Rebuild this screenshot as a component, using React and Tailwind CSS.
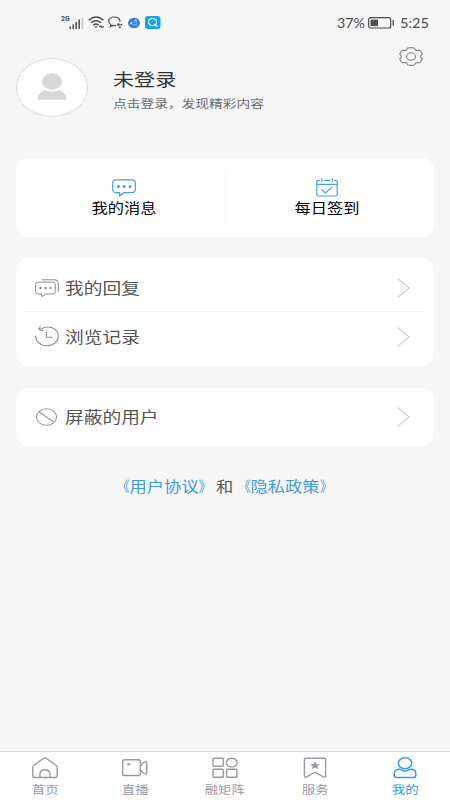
const tabs = [
  { label: "首页", icon: HomeIcon },
  { label: "直播", icon: LiveIcon },
  { label: "融矩阵", icon: MatrixIcon },
  { label: "服务", icon: ServiceIcon },
  { label: "我的", icon: MineIcon, active: true },
];

/* ---------- status bar icons ---------- */

function SignalIcon() {
  return (
    <svg width="15" height="12" viewBox="0 0 15 12">
      <path d="M1.2 9.5V12M4.2 7.5V12M7.2 5V12M10.2 2.5V12" stroke="#555" strokeWidth="1.6" />
      <path d="M13.4 0.5V12" stroke="#c8c8c8" strokeWidth="1.6" />
    </svg>
  );
}

function WifiIcon() {
  return (
    <svg width="17" height="13" viewBox="0 0 17 13" fill="none" stroke="#4a4a4a" strokeWidth="1.5">
      <path d="M0.8 4.2Q8 -2.2 15.4 4.2M3 6.8Q8 2.6 13 6.8M5.3 9.1Q8 7 10.7 9.1" />
      <path d="M6.4 10.3h3.2L8 12z" fill="#4a4a4a" stroke="none" />
      <path d="M11.2 11l1.4-1 1.6 1.4 1.4-1" strokeWidth="1.2" />
    </svg>
  );
}

function BubbleIcon() {
  return (
    <svg width="15" height="13" viewBox="0 0 15 13" fill="none" stroke="#4a4a4a" strokeWidth="1.2">
      <path d="M8 9.3Q6.5 9.8 4.8 9.4L2.3 10.6L2.7 8.5Q.7 7.3 .7 5.3C.7 2.8 3.2 1 6.3 1C9.6 1 12.2 2.9 12 5.8" />
      <circle cx="10.5" cy="8.6" r="1.3" fill="#4a4a4a" stroke="none" />
      <circle cx="13.3" cy="8.8" r="1" fill="#4a4a4a" stroke="none" />
      <circle cx="11.8" cy="11.2" r="1" fill="#4a4a4a" stroke="none" />
    </svg>
  );
}

function GlobeBadge() {
  return (
    <svg width="16" height="14" viewBox="0 0 16 14">
      <rect width="16" height="14" rx="4" fill="#fdfdfd" />
      <ellipse cx="8" cy="7" rx="6" ry="5.2" fill="#3d7bd9" />
      <path d="M4.5 7.5l5-3.5M4.5 7.5l6.5 2M9.5 4l1.5 5.5" stroke="#a9caf5" strokeWidth=".7" fill="none" />
      <circle cx="5" cy="7.3" r=".9" fill="#d3e4fb" />
      <circle cx="10" cy="4.5" r=".7" fill="#d3e4fb" />
    </svg>
  );
}

function SearchBadge() {
  return (
    <svg width="16" height="13" viewBox="0 0 16 13">
      <rect width="15.5" height="13" rx="3" fill="#18a3e6" />
      <ellipse cx="7.5" cy="6" rx="4" ry="3.5" fill="none" stroke="#fff" strokeWidth="1.2" />
      <path d="M10.2 8.5l2 1.7" stroke="#fff" strokeWidth="1.2" strokeLinecap="round" />
    </svg>
  );
}

function BatteryIcon() {
  return (
    <svg width="27" height="12" viewBox="0 0 27 12">
      <rect x=".7" y=".7" width="22" height="10.3" rx="2" fill="none" stroke="#4a4a4a" strokeWidth="1.2" />
      <rect x="2.6" y="2.6" width="7.4" height="6.5" fill="#505050" />
      <path d="M25.2 3v5.7" stroke="#4a4a4a" strokeWidth="1.3" />
    </svg>
  );
}

/* ---------- page icons ---------- */

function GearIcon() {
  return (
    <svg width="24" height="19" viewBox="0 0 24 19" fill="none" stroke="#828282" strokeWidth="1.1">
      <path d="M8.8 1Q12 .2 15.2 1L16.5 3Q17.2 3.6 18.2 3.4L20.6 3.2Q22.7 5 23.3 7.2L21.8 8.8Q21.4 9.5 21.8 10.2L23.3 11.8Q22.7 14 20.6 15.8L18.2 15.6Q17.2 15.5 16.5 16.2L15.2 18Q12 18.8 8.8 18L7.5 16.2Q6.8 15.5 5.8 15.6L3.4 15.8Q1.3 14 .7 11.8L2.2 10.2Q2.6 9.5 2.2 8.8L.7 7.2Q1.3 5 3.4 3.2L5.8 3.4Q6.8 3.6 7.5 3Z" />
      <ellipse cx="12" cy="9.5" rx="4.5" ry="3.7" />
    </svg>
  );
}

function MessageIcon() {
  return (
    <svg width="24" height="18" viewBox="0 0 24 18" fill="none" stroke="#4e9fd8" strokeWidth="1.2">
      <path d="M4 .9H20Q23.3 .9 23.3 4V10.6Q23.3 13.7 20 13.7H12L7.6 16.8V13.7H4Q.7 13.7 .7 10.6V4Q.7 .9 4 .9Z" />
      <g fill="#3f97d8" stroke="none">
        <ellipse cx="6.3" cy="7.6" rx="1.5" ry="1.3" />
        <ellipse cx="12.2" cy="7.6" rx="1.5" ry="1.3" />
        <ellipse cx="18" cy="7.6" rx="1.5" ry="1.3" />
      </g>
    </svg>
  );
}

function CalendarIcon() {
  return (
    <svg width="22" height="19" viewBox="0 0 22 19" fill="none" stroke="#4e9fd8" strokeWidth="1.2">
      <path d="M3.8 2.4H2.5Q.8 2.4 .8 4V16.8Q.8 18 2.5 18H19.5Q21.2 18 21.2 16.8V4Q21.2 2.4 19.5 2.4H18.2M7.8 2.4H14.2M.8 6.3H21.2M5.8 .4V4.2M16.2 .4V4.2" />
      <path d="M5.6 11.5L9.4 15L16 9.2" />
    </svg>
  );
}

function ReplyIcon() {
  return (
    <svg width="24" height="19" viewBox="0 0 24 19" fill="none" stroke="#8a8a8a" strokeWidth="1">
      <path d="M3.5 3.1H17.5Q20.3 3.1 20.3 5.8V12.3Q20.3 15 17.5 15H10.5L6.7 17.7V15H3.5Q.7 15 .7 12.3V5.8Q.7 3.1 3.5 3.1Z" />
      <path d="M7 .8H20Q23.2 .8 23.2 3.6V13.2" />
      <g fill="#8a8a8a" stroke="none">
        <circle cx="5.5" cy="9" r="1.2" />
        <circle cx="10.5" cy="9" r="1.2" />
        <circle cx="15.5" cy="9" r="1.2" />
      </g>
    </svg>
  );
}

function HistoryIcon() {
  return (
    <svg width="24" height="21" viewBox="0 0 24 21" fill="none" stroke="#8e8e8e" strokeWidth="1.1">
      <path d="M5.2 3.5C13-2 23.3 2.3 23.3 10.3C23.3 15.7 18.3 19.7 12 19.7C5.5 19.7 .5 15.6 .7 9.5" />
      <path d="M5.2 .5L4.3 3.7L8.2 4.6M3.4 2.4L5 4" />
      <path d="M11.5 5.5V11.2H17.5" />
    </svg>
  );
}

function BlockIcon() {
  return (
    <svg width="24" height="19" viewBox="0 0 24 19" fill="none" stroke="#999" strokeWidth="1.1">
      <ellipse cx="11.5" cy="9" rx="10" ry="8.3" />
      <path d="M4 3.8L19 14.2" />
    </svg>
  );
}

function ArrowIcon() {
  return (
    <svg width="13" height="20" viewBox="0 0 13 20" fill="none" stroke="#bdbdbd" strokeWidth="1">
      <path d="M.5 .5L12.3 10L.5 19.5" />
    </svg>
  );
}

/* ---------- tab icons ---------- */

function HomeIcon() {
  return (
    <svg width="28" height="22" viewBox="0 0 28 22" fill="none" stroke="currentColor" strokeWidth="1.4">
      <path d="M12.3 1.5Q14 .3 15.7 1.5L25 8.3Q26.2 9.2 26.2 10.5V18.6Q26.2 20.5 24.3 20.5H3.7Q1.8 20.5 1.8 18.6V10.5Q1.8 9.2 3 8.3Z" />
      <path d="M9 20.5V17Q9 12.8 14 12.8Q19 12.8 19 17V20.5" />
    </svg>
  );
}

function LiveIcon() {
  return (
    <svg width="28" height="22" viewBox="0 0 28 22" fill="none" stroke="currentColor" strokeWidth="1.4">
      <rect x="1.7" y="2.8" width="17.6" height="15.7" rx="1.8" />
      <path d="M19.3 9L22.3 5.6Q25.8 3.6 25.8 5.6V16Q25.8 18 22.3 16L19.3 12.8" />
      <ellipse cx="7.6" cy="7.3" rx="1.5" ry="1.3" fill="currentColor" stroke="none" />
    </svg>
  );
}

function MatrixIcon() {
  return (
    <svg width="28" height="22" viewBox="0 0 28 22" fill="none" stroke="currentColor" strokeWidth="1.4">
      <rect x="2" y="1.2" width="10.3" height="8" rx=".8" />
      <ellipse cx="20.7" cy="5.7" rx="5.4" ry="4.4" />
      <rect x="2" y="12.3" width="10.3" height="8" rx=".8" />
      <rect x="15.6" y="12.3" width="10.3" height="8" rx=".8" />
    </svg>
  );
}

function ServiceIcon() {
  return (
    <svg width="28" height="22" viewBox="0 0 28 22" fill="none" stroke="currentColor" strokeWidth="1.4">
      <path d="M4.600 1.200H23.400Q24.600 1.200 24.600 2.300V18.900Q24.600 21 22.300 19.900L14 15.200L5.700 19.900Q3.400 21 3.400 18.900V2.300Q3.400 1.200 4.600 1.200Z" />
      <path d="M14 4L15.400 7.100H19L16.200 9.100L17.300 12.500L14 10.500L10.700 12.500L11.800 9.100L9 7.100H12.600Z" fill="currentColor" stroke="none" />
    </svg>
  );
}

function MineIcon() {
  return (
    <svg width="28" height="22" viewBox="0 0 28 22" fill="none" stroke="currentColor" strokeWidth="1.5">
      <ellipse cx="14" cy="6.3" rx="6.7" ry="5.5" />
      <path d="M7.5 12.3Q3.2 13 3.2 17.2V18.5Q3.2 20.4 5.4 20.4H22.6Q24.8 20.4 24.8 18.5V17.2Q24.8 13 20.5 12.3Q18.5 12.2 17 13.2Q14 14.8 11 13.2Q9.5 12.2 7.5 12.3Z" />
    </svg>
  );
}

function MenuRow({ icon: Icon, label }) {
  return (
    <div className="flex items-center pl-[19px] pr-6">
      <Icon />
      <span className="ml-[6px] origin-left scale-x-[1.2] text-[15.6px] leading-none text-[#555]">
        {label}
      </span>
      <span className="ml-auto">
        <ArrowIcon />
      </span>
    </div>
  );
}

function AgreementLink({ children }) {
  return (
    <span className="text-[#419bd8]">
      <span className="inline-block origin-right scale-x-[0.72]">《</span>
      {children}
      <span className="inline-block origin-left scale-x-[0.72]">》</span>
    </span>
  );
}

export default function App() {
  return (
    <div className="flex h-[800px] w-[450px] flex-col overflow-hidden bg-[#f6f6f6] font-['Noto_Sans_CJK_SC',sans-serif]">
      {/* Status bar */}
      <header className="flex h-[45px] shrink-0 items-center pl-[61px] text-[#4a4a4a]">
        <span className="mb-[7px] w-2 origin-left font-['Roboto',sans-serif] text-[7px] font-bold leading-none">
          2G
        </span>
        <SignalIcon />
        <span className="ml-[4px]">
          <WifiIcon />
        </span>
        <span className="ml-[3px]">
          <BubbleIcon />
        </span>
        <span className="ml-[3px]">
          <GlobeBadge />
        </span>
        <span className="ml-[3px]">
          <SearchBadge />
        </span>
        <span className="ml-auto w-[31px] origin-left scale-x-[1.1] pt-px font-['Lato',sans-serif] text-[13px] leading-none">
          37%
        </span>
        <BatteryIcon />
        <span className="ml-[5px] mr-[21px] w-[29px] origin-left scale-x-[1.12] pt-px font-['Lato',sans-serif] text-[13px] leading-none">
          5:25
        </span>
      </header>

      {/* Profile */}
      <section className="flex h-[113px] shrink-0 pl-4 pr-[27px]">
        <div className="mt-[13px] flex h-[59px] w-[72px] items-center justify-center rounded-[50%] border border-[#dedede] bg-white pb-[2px]">
          <svg width="30" height="27" viewBox="0 0 30 27" fill="#d8d8d8">
            <ellipse cx="15" cy="8.5" rx="10" ry="8.3" />
            <path d="M.2 26.7Q1 19 8 17Q15 20.5 22 17Q29 19 29.8 26.7Z" />
          </svg>
        </div>
        <div className="ml-[25px] pt-[25px]">
          <h1 className="origin-left scale-x-[1.2] text-[17.6px] leading-[18px] text-[#333]">未登录</h1>
          <p className="mt-[9px] w-[130px] origin-left scale-x-[1.2] whitespace-nowrap text-[11.45px] leading-[12px] text-[#6a6a6a]">
            点击登录，发现精彩内容
          </p>
        </div>
        <div className="ml-auto mt-[2px]">
          <GearIcon />
        </div>
      </section>

      {/* Shortcuts */}
      <section className="mx-4 flex h-[79px] shrink-0 items-center rounded-[12px] bg-white">
        <div className="flex flex-1 flex-col items-center pb-[4px] pl-[7px]">
          <div className="flex h-5 items-end">
            <MessageIcon />
          </div>
          <span className="mt-[3px] scale-x-[1.2] text-[13.5px] leading-[14px] text-black">我的消息</span>
        </div>
        <div className="h-[53px] w-px bg-[#f6f6f6]"></div>
        <div className="flex flex-1 flex-col items-center pb-[4px] pr-[6px]">
          <div className="flex h-5 items-end">
            <CalendarIcon />
          </div>
          <span className="mt-[3px] scale-x-[1.2] text-[13.5px] leading-[14px] text-black">每日签到</span>
        </div>
      </section>

      {/* Menu */}
      <section className="mx-4 mt-[21px] flex h-[108px] shrink-0 flex-col rounded-[12px] bg-white pt-5">
        <MenuRow icon={ReplyIcon} label="我的回复" />
        <div className="mx-2 mb-[14px] mt-[13px] h-px bg-[#f7f7f7]"></div>
        <MenuRow icon={HistoryIcon} label="浏览记录" />
      </section>

      <section className="mx-4 mt-[22px] flex h-[58px] shrink-0 flex-col justify-center rounded-[12px] bg-white">
        <MenuRow icon={BlockIcon} label="屏蔽的用户" />
      </section>

      {/* Agreements */}
      <p className="mt-[31px] text-center text-[14.4px] leading-[18px] text-[#555]">
        <span className="inline-block scale-x-[1.2]">
          <AgreementLink>用户协议</AgreementLink>和<AgreementLink>隐私政策</AgreementLink>
        </span>
      </p>

      {/* Tab bar */}
      <nav className="mt-auto flex h-[49px] shrink-0 border-t border-[#dcdcdc] bg-white">
        {tabs.map(({ label, icon: Icon, active }) => (
          <div
            key={label}
            className={`flex flex-1 flex-col items-center pt-[5px] ${
              active ? "text-[#3c9ae0]" : "text-[#9a9aa2]"
            }`}
          >
            <Icon />
            <span className="mt-[4px] scale-x-[1.2] text-[11.2px] leading-[12px]">{label}</span>
          </div>
        ))}
      </nav>
    </div>
  );
}
